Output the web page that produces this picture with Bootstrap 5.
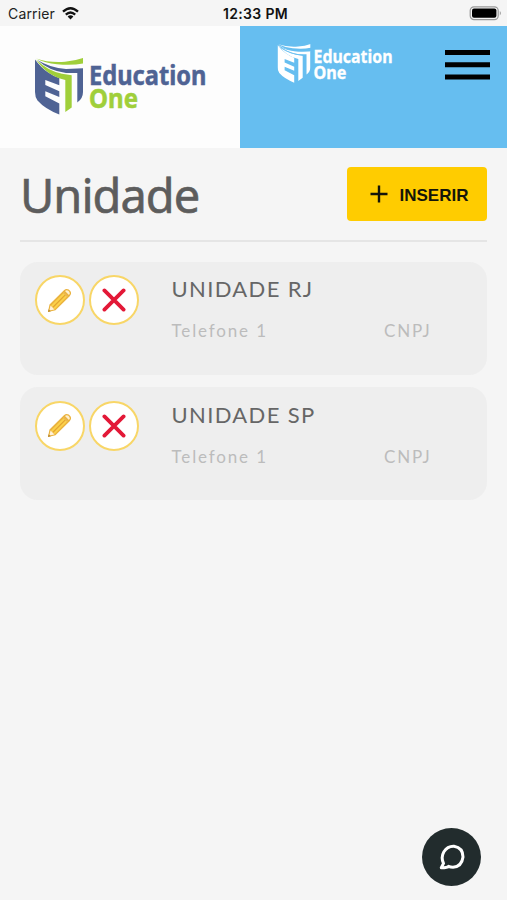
<!DOCTYPE html>
<html lang="pt-BR">
<head>
<meta charset="utf-8">
<meta name="viewport" content="width=device-width, initial-scale=1">
<title>Unidade - Education One</title>
<link href="https://cdn.jsdelivr.net/npm/bootstrap@5.3.0/dist/css/bootstrap.min.css" rel="stylesheet">
<style>
body{background:#f5f5f5;font-family:"Lato",sans-serif;color:#666;min-height:900px}
svg{display:block;flex:none}
.statusbar{height:25.5px;font:15px/27px "Inter",sans-serif;color:#222}
.statusbar .carrier{font-size:14px;letter-spacing:.15px}
.statusbar .clock{font-weight:600;font-size:14px;letter-spacing:.35px;color:#111}
.brandbar{height:122px}
.brand-main{width:240px;background:#fdfdfd;padding:31.5px 0 0 34px}
.brand-side{background:#66bef0;padding:17.5px 17px 0 37px}
.menu-btn{width:45px;height:31px;margin-top:5.5px}
.page{padding:19.5px 20px 0}
.page-title{font:400 47px/57px "Noto Sans",sans-serif;letter-spacing:-1px;color:#5d5d5d;-webkit-text-stroke:.6px #5d5d5d;margin:0}
.title-row{height:74.5px;border-bottom:2px solid #e5e5e5}
.btn-insert{--bs-btn-bg:#fc0;--bs-btn-color:#15150a;--bs-btn-hover-bg:#f2c200;width:140px;height:54px;border:0;border-radius:4px;font:700 17px/1 "Liberation Sans",sans-serif}
.btn-insert .label{padding-top:2px}
.unit-list{margin-top:20px;gap:12.5px}
.unit{height:113px;border:0;border-radius:18px;background:#eee;padding:13.5px 14.5px}
.round-btn{width:50px;height:50px;background:#fff;border:2px solid #f8d667;border-radius:50%}
.unit-info{margin-left:33px;padding-top:1px}
.unit-name{font-size:22px;line-height:26px;letter-spacing:1.35px;color:#666}
.unit-meta{font-size:17px;line-height:20px;letter-spacing:1.85px;color:#bcbcbc;margin-top:19px}
.unit-phone{width:212.5px}
.unit-cnpj{letter-spacing:1.8px}
.chat-btn{width:59px;height:58px;right:26px;bottom:14.5px;background:#222c2d;border-radius:50%}
</style>
</head>
<body>
<svg width="0" height="0" class="position-absolute" aria-hidden="true">
  <defs>
    <symbol id="pencil" viewBox="0 0 26 26">
      <path d="M1 25 2.6 17.2 17.6 2.4Q20 0 22.6 1.6L24.4 3.5Q26 6 23.6 8.5L8.8 23.2Z" fill="#eab23e"/>
      <path d="M4.2 18.2 17.8 4.6 21.6 8.4 8 22Z" fill="#fbd14b"/>
      <path d="M6.2 20 19.6 6.6" stroke="#e3a332" stroke-width="1.2"/>
      <path d="M2.5 23.5 3.7 18.3 7.8 22.3Z" fill="#fff1d9"/>
      <path d="M1 25 1.7 22 4 24.3Z" fill="#b9882f"/>
      <path d="M18.7 3.2Q20.6 1.4 22.2 2.9L23.1 3.8Q24.6 5.5 22.8 7.2Z" fill="#fff0ce"/>
      <path d="M16.9 4.4 21.7 9.2" stroke="#e9b755" stroke-width="1.3"/>
    </symbol>
    <symbol id="cross" viewBox="0 0 24 24">
      <path d="M2.4 2.4 21.6 21.6M21.6 2.4 2.4 21.6" stroke="#e31837" stroke-width="3.8" stroke-linecap="round"/>
    </symbol>
    <symbol id="shield" viewBox="0 0 48 57">
      <path fill="var(--ink)" d="M0 1.5Q6 9.5 12.5 14 18 18 24.3 20V27.3L10.3 22V27L24.3 33.3V39L10.3 33.2V38.2L24.3 45.5V56.5Q10 51 2.5 42.5Q0 39 0 34Z"/>
      <path fill="var(--leaf)" d="M1 .5Q14 5 30 3.8 40 3 48.3 0V5.4Q37 7.8 22 6.2 10 5 1 .5Z"/>
      <path fill="var(--ink)" d="M2 1.8Q15 10 31 11L48 10.3V34Q48 40.5 42.3 44.5V15L31 15Q14 13 2 1.8Z"/>
      <path fill="var(--leaf)" d="M1 1.5Q13 13 27 15.7L36.7 17.3V49.5L30.3 54V22Q12 18 1 1.5Z"/>
    </symbol>
  </defs>
</svg>

<header>
  <div class="statusbar position-relative d-flex justify-content-between px-2">
    <div class="d-flex gap-2">
      <span class="carrier">Carrier</span>
      <svg width="17" height="13" viewBox="0 0 17 13" style="margin:7px 0 0 -1px" fill="none" stroke="#111" stroke-width="2.3"><path d="M1 4.7Q8.5-2.2 16 4.7M3.8 7.6Q8.5 3.3 13.2 7.6"/><path d="M5.6 9.5Q8.5 7 11.4 9.5L8.5 12.5Z" fill="#111" stroke="none"/></svg>
    </div>
    <span class="clock position-absolute start-50 translate-middle-x ps-1 text-nowrap">12:33 PM</span>
    <svg width="33" height="15" viewBox="0 0 33 15" style="margin:6px -3px 0 0"><rect x="1.2" y=".8" width="28" height="12.8" rx="3.8" fill="#f5f5f5" stroke="#999" stroke-width="1.2"/><rect x="3" y="2.6" width="24.4" height="9.2" rx="2" fill="#000"/><path d="M30.8 5Q33 7.2 30.8 9.4Z" fill="#999"/></svg>
  </div>
  <div class="brandbar d-flex">
    <div class="brand-main flex-shrink-0">
      <svg width="175" height="60" viewBox="0 0 175 60" overflow="visible" style="--ink:#4f6394;--leaf:#a0cf3a">
        <use href="#shield" x="1" y="1" width="48" height="57"/>
        <g font-family="'Noto Sans',sans-serif" font-weight="700" stroke-width=".5">
          <text x="55" y="27.5" font-size="26.5" textLength="117.5" lengthAdjust="spacingAndGlyphs" fill="#4f6394" stroke="#4f6394">Education</text>
          <text x="55" y="50.5" font-size="26.5" textLength="49" lengthAdjust="spacingAndGlyphs" fill="#a0cf3a" stroke="#a0cf3a">One</text>
        </g>
      </svg>
    </div>
    <div class="brand-side flex-grow-1 d-flex justify-content-between align-items-start">
      <svg width="117" height="42" viewBox="0 0 117 42" overflow="visible" style="--ink:#fff;--leaf:#fff">
        <use href="#shield" x=".5" y="1" width="33" height="39"/>
        <path d="M3 4Q16 9.5 33.5 8M4 5Q13 11 26 12.3" fill="none" stroke="#66bef0" stroke-width=".8"/>
        <g font-family="'Noto Sans',sans-serif" font-weight="700" fill="#fff" stroke="#fff" stroke-width=".3">
          <text x="36.5" y="20" font-size="18" textLength="79" lengthAdjust="spacingAndGlyphs">Education</text>
          <text x="36.5" y="35.5" font-size="18" textLength="33" lengthAdjust="spacingAndGlyphs">One</text>
        </g>
      </svg>
      <button class="menu-btn btn p-0 border-0 rounded-0" aria-label="Menu">
        <svg width="45" height="31" viewBox="0 0 45 31"><path d="M0 3.5H45M0 15.8H45M0 28.1H45" stroke="#000" stroke-width="5"/></svg>
      </button>
    </div>
  </div>
</header>

<main class="page">
  <div class="title-row d-flex justify-content-between align-items-start">
    <h1 class="page-title">Unidade</h1>
    <button class="btn btn-insert d-flex align-items-center justify-content-center p-0 ps-1">
      <svg width="18" height="18" viewBox="0 0 18 18" class="me-2"><path d="M9 .5V17.5M.5 9H17.5" stroke="#15150a" stroke-width="2.4"/></svg>
      <span class="label ms-1">INSERIR</span>
    </button>
  </div>
  <div class="unit-list d-flex flex-column">
    <article class="unit card flex-row">
      <div class="d-flex gap-1">
        <button class="round-btn btn p-0 d-flex align-items-center justify-content-center" aria-label="Editar"><svg width="25" height="25"><use href="#pencil"/></svg></button>
        <button class="round-btn btn p-0 d-flex align-items-center justify-content-center" aria-label="Excluir"><svg width="24" height="24"><use href="#cross"/></svg></button>
      </div>
      <div class="unit-info">
        <div class="unit-name">UNIDADE RJ</div>
        <div class="unit-meta d-flex"><span class="unit-phone">Telefone 1</span><span class="unit-cnpj">CNPJ</span></div>
      </div>
    </article>
    <article class="unit card flex-row">
      <div class="d-flex gap-1">
        <button class="round-btn btn p-0 d-flex align-items-center justify-content-center" aria-label="Editar"><svg width="25" height="25"><use href="#pencil"/></svg></button>
        <button class="round-btn btn p-0 d-flex align-items-center justify-content-center" aria-label="Excluir"><svg width="24" height="24"><use href="#cross"/></svg></button>
      </div>
      <div class="unit-info">
        <div class="unit-name">UNIDADE SP</div>
        <div class="unit-meta d-flex"><span class="unit-phone">Telefone 1</span><span class="unit-cnpj">CNPJ</span></div>
      </div>
    </article>
  </div>
</main>

<button class="chat-btn btn position-fixed border-0 p-0 d-flex align-items-center justify-content-center" aria-label="Chat">
  <svg width="26" height="26" viewBox="0 0 26 26" fill="none" stroke="#fff" stroke-width="3" stroke-linejoin="round"><path d="M2.3 23.7 4.5 19.4Q1.6 13.4 4.9 7.7 8.6 2 15 2.3 24 3.8 24 13 22.8 22.6 14 23.2 11.5 23.2 9.5 22.3 8.5 23.7 2.3 23.7Z"/></svg>
</button>
<script src="https://cdn.jsdelivr.net/npm/bootstrap@5.3.0/dist/js/bootstrap.bundle.min.js"></script>
</body>
</html>
